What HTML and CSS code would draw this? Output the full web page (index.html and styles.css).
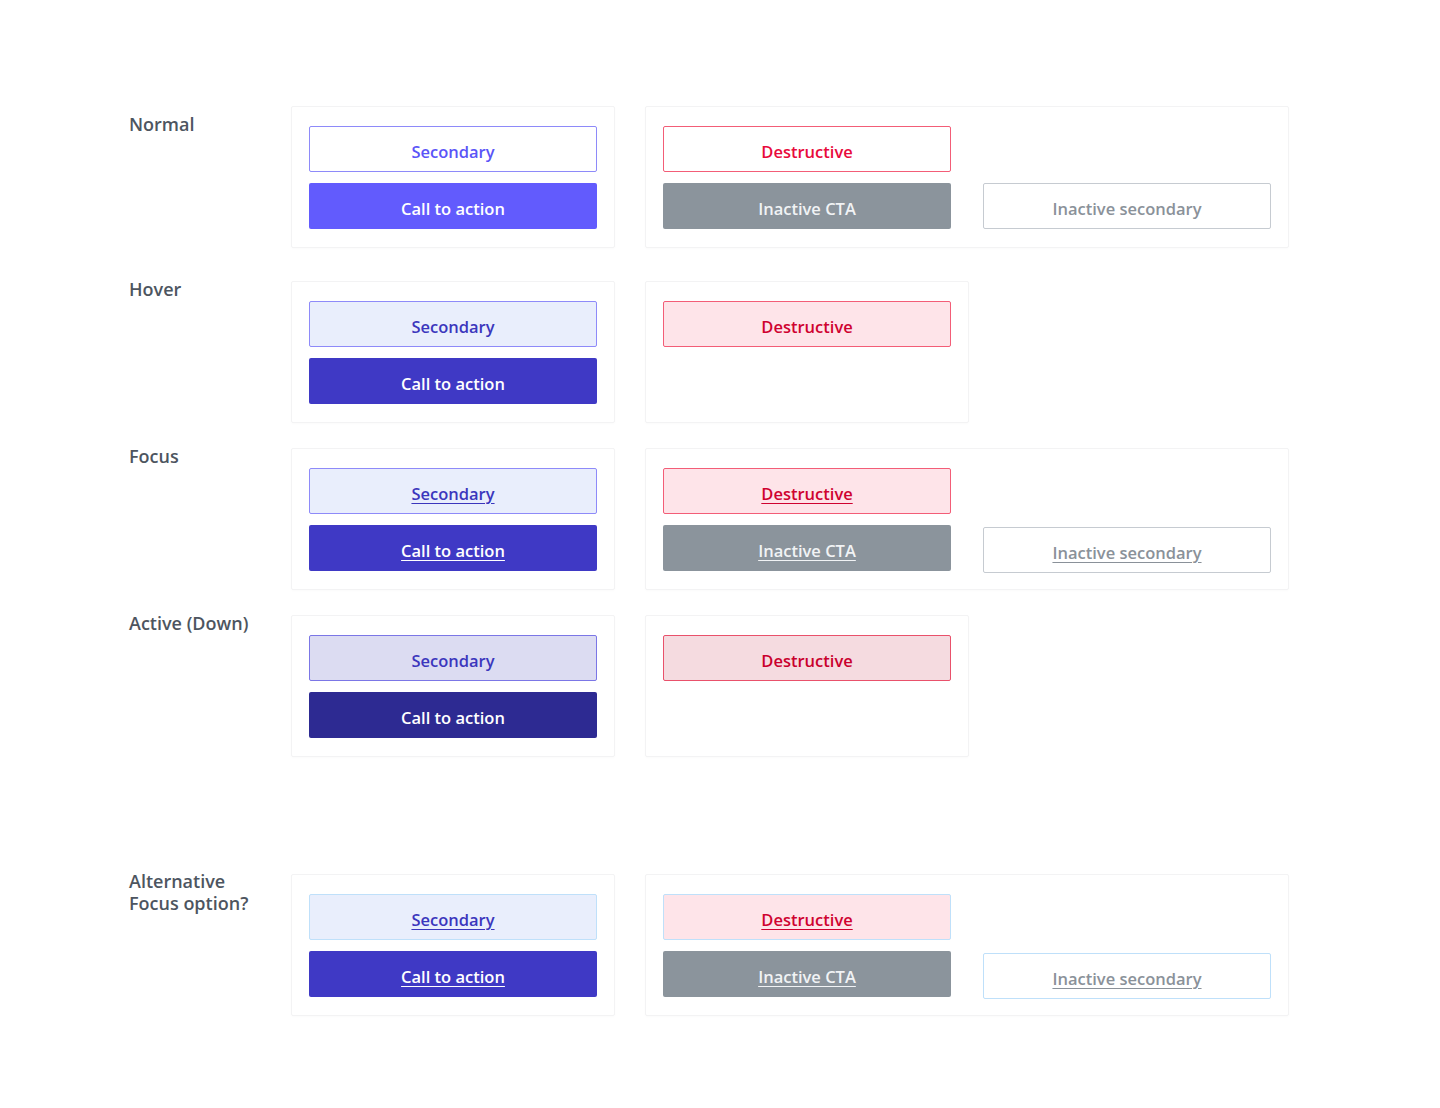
FILE: index.html
```html
<!DOCTYPE html>
<html lang="en">
<head>
    <meta charset="UTF-8">
    <meta name="viewport" content="width=device-width, initial-scale=1.0">
    <title>Button states</title>
    <link rel="stylesheet" href="styles.css">
</head>
<body>

<main class="states">

    <!-- Normal -->
    <section class="state-row row-normal">
        <h3 class="state-label">Normal</h3>
        <div class="panel">
            <button class="btn secondary">Secondary</button>
            <button class="btn cta">Call to action</button>
        </div>
        <div class="panel panel-wide">
            <button class="btn destructive">Destructive</button>
            <span></span>
            <button class="btn inactive-cta">Inactive CTA</button>
            <button class="btn inactive-secondary">Inactive secondary</button>
        </div>
    </section>

    <!-- Hover -->
    <section class="state-row row-hover">
        <h3 class="state-label">Hover</h3>
        <div class="panel">
            <button class="btn secondary hover">Secondary</button>
            <button class="btn cta hover">Call to action</button>
        </div>
        <div class="panel">
            <button class="btn destructive hover">Destructive</button>
        </div>
    </section>

    <!-- Focus -->
    <section class="state-row">
        <h3 class="state-label">Focus</h3>
        <div class="panel">
            <button class="btn secondary hover focus">Secondary</button>
            <button class="btn cta hover focus">Call to action</button>
        </div>
        <div class="panel panel-wide">
            <button class="btn destructive hover focus">Destructive</button>
            <span></span>
            <button class="btn inactive-cta focus">Inactive CTA</button>
            <button class="btn inactive-secondary focus shifted">Inactive secondary</button>
        </div>
    </section>

    <!-- Active -->
    <section class="state-row">
        <h3 class="state-label">Active (Down)</h3>
        <div class="panel">
            <button class="btn secondary active">Secondary</button>
            <button class="btn cta active">Call to action</button>
        </div>
        <div class="panel">
            <button class="btn destructive active">Destructive</button>
        </div>
    </section>

    <!-- Alternative focus -->
    <section class="state-row row-alt">
        <h3 class="state-label">Alternative<br>Focus option?</h3>
        <div class="panel">
            <button class="btn secondary hover focus ring">Secondary</button>
            <button class="btn cta hover focus">Call to action</button>
        </div>
        <div class="panel panel-wide">
            <button class="btn destructive hover focus ring">Destructive</button>
            <span></span>
            <button class="btn inactive-cta focus">Inactive CTA</button>
            <button class="btn inactive-secondary focus ring shifted">Inactive secondary</button>
        </div>
    </section>

</main>

</body>
</html>
```

FILE: styles.css
```css
/* General styles */
body {
    font-family: "Open Sans", "Noto Sans", sans-serif;
    background-color: #ffffff;
    margin: 0;
    padding: 0;
}

.states {
    padding: 106px 0 0 129px;
}

/* Rows */
.state-row {
    display: flex;
    align-items: flex-start;
    gap: 30px;
    margin-bottom: 25px;
}

.state-row.row-normal {
    margin-bottom: 33px;
}

.state-row.row-alt {
    margin-top: 117px;
}

.state-label {
    width: 132px;
    margin: -3px 0 0;
    font-size: 18px;
    line-height: 22px;
    font-weight: 600;
    color: #4d5560;
}

.row-normal .state-label {
    margin-top: 7px;
}

.row-alt .state-label {
    margin-top: -4px;
}

/* Panels */
.panel {
    display: grid;
    grid-template-columns: 288px;
    row-gap: 11px;
    column-gap: 32px;
    align-content: start;
    height: 103px;
    padding: 19px 17px 18px;
    border: 1px solid #f3f3f4;
    border-radius: 2px;
    box-shadow: 0 1px 2px rgba(0, 0, 0, 0.02);
}

.panel-wide {
    grid-template-columns: 288px 288px;
}

/* Buttons */
.btn {
    height: 46px;
    margin: 0;
    padding: 4px 0 0;
    font-family: inherit;
    font-size: 16.5px;
    font-weight: 600;
    border: 1px solid transparent;
    border-radius: 2px;
    background-color: #ffffff;
    cursor: pointer;
}

.btn.secondary {
    color: #5a54f7;
    border-color: #8e8af9;
}

.btn.secondary.hover {
    color: #3b36bd;
    background-color: #e9eefc;
}

.btn.secondary.active {
    color: #3b36bd;
    background-color: #dcdcf2;
    border-color: #7b76e6;
}

.btn.cta {
    color: #ffffff;
    background-color: #625bfd;
}

.btn.cta.hover {
    background-color: #3f39c5;
}

.btn.cta.active {
    background-color: #2d2a92;
}

.btn.destructive {
    color: #e80a3c;
    border-color: #f35d77;
}

.btn.destructive.hover {
    color: #cf0230;
    background-color: #fee4e9;
}

.btn.destructive.active {
    color: #c9002d;
    background-color: #f5dbe0;
    border-color: #e9516b;
}

.btn.inactive-cta {
    color: #f1f3f5;
    background-color: #8b949c;
}

.btn.inactive-secondary {
    color: #8a9199;
    border-color: #c6cbd1;
}

/* Focus states */
.btn.focus {
    text-decoration: underline;
    text-decoration-thickness: 1px;
    text-underline-offset: 3px;
}

.btn.ring {
    border-color: #bfe0fa;
}

.btn.shifted {
    margin-top: 2px;
}
```
